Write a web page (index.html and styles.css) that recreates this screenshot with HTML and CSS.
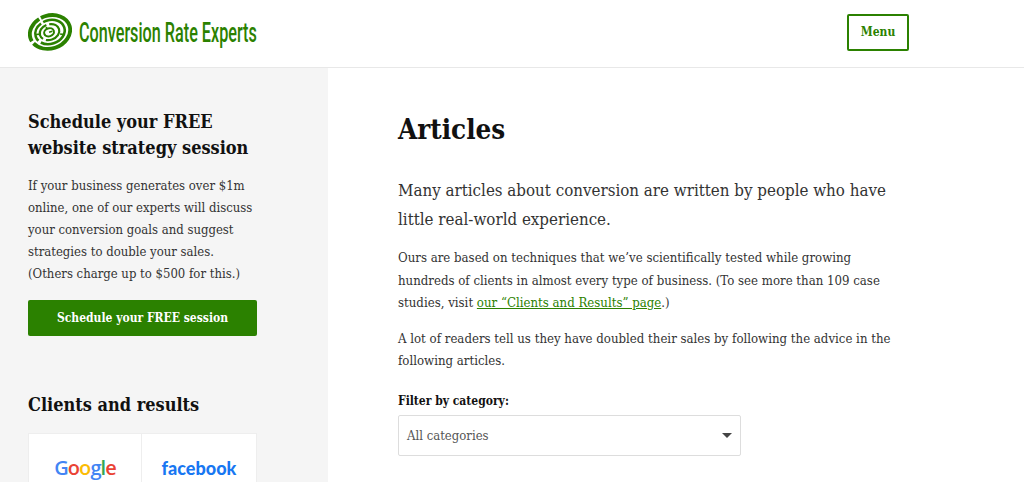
FILE: index.html
```html
<!DOCTYPE html>
<html lang="en">
<head>
<meta charset="utf-8">
<title>Articles</title>
<link rel="stylesheet" href="styles.css">
</head>
<body>
<header class="top">
  <a class="logo" href="#">
    <svg class="mark" viewBox="0 0 44 38" width="44" height="38" fill="none" stroke="#2b8100">
      <g transform="rotate(-18 22 19)">
        <ellipse cx="22" cy="19" rx="20.5" ry="16.5" stroke-width="3.8" stroke-dasharray="52 2.5 26 2 60 3"/>
        <ellipse cx="22" cy="19" rx="15" ry="11.8" stroke-width="2.6" stroke-dasharray="34 3 20 2.5 30"/>
        <ellipse cx="21.5" cy="19" rx="10" ry="7.8" stroke-width="2.2" stroke-dasharray="20 3 18 3"/>
        <ellipse cx="21" cy="19" rx="5" ry="4" stroke-width="2"/>
        <path d="M21 19h3.5M20 15v-2M31 24l4 2M8 17l4 1" stroke-width="1.6"/>
      </g>
    </svg>
    <span class="wordmark">Conversion Rate Experts</span>
  </a>
  <a class="menu" href="#">Menu</a>
</header>
<div class="page">
  <aside class="side">
    <h2 class="side-h">Schedule your FREE website strategy session</h2>
    <p class="side-p">If your business generates over $1m online, one of our experts will discuss your conversion goals and suggest strategies to double your sales. (Others charge up to $500 for this.)</p>
    <a class="cta" href="#">Schedule your FREE session</a>
    <h2 class="side-h clients-h">Clients and results</h2>
    <div class="clients">
      <div class="client client-first">
        <span class="google"><span class="b">G</span><span class="r">o</span><span class="y">o</span><span class="b">g</span><span class="g">l</span><span class="r">e</span></span>
      </div>
      <div class="client"><span class="facebook">facebook</span></div>
    </div>
  </aside>
  <main class="main">
    <h1 class="title">Articles</h1>
    <p class="lead">Many articles about conversion are written by people who have little real-world experience.</p>
    <p class="body">Ours are based on techniques that we’ve scientifically tested while growing hundreds of clients in almost every type of business. (To see more than 109 case studies, visit <a href="#">our “Clients and Results” page</a>.)</p>
    <p class="body">A lot of readers tell us they have doubled their sales by following the advice in the following articles.</p>
    <label class="filter-label">Filter by category:</label>
    <div class="select">All categories<span class="caret"></span></div>
  </main>
</div>
</body>
</html>
```
FILE: styles.css
```css
* { box-sizing: border-box; }
html, body { margin: 0; height: 482px; overflow: hidden; }
body { font-family: "DejaVu Serif Condensed", "DejaVu Serif", serif; color: #111; background: #fff; }
.top { height: 68px; border-bottom: 1px solid #e8e8e8; display: flex; align-items: center; padding: 0 115px 3px 28px; justify-content: space-between; }
.logo { display: flex; align-items: center; gap: 7px; text-decoration: none; width: 240px; flex: none; }
.mark { display: block; flex: none; }
.wordmark { font-family: "Roboto", sans-serif; font-weight: 500; font-size: 27px; color: #2b8100; white-space: nowrap; display: inline-block; transform: scaleX(.6); transform-origin: left center; padding-top: 2px; }
.menu { width: 62px; height: 37px; border: 2px solid #2b8100; border-radius: 2px; display: flex; align-items: center; justify-content: center; color: #2b8100; font-weight: 700; font-size: 12px; text-decoration: none; }
.page { display: flex; height: 414px; overflow: hidden; }
.side { width: 328px; background: #f5f5f5; padding: 41px 71px 0 28px; flex: none; }
.side-h { margin: 0; font-size: 18px; line-height: 26px; font-weight: 700; }
.side-p { margin: 14px 0 0; font-size: 13px; line-height: 22px; color: #333; }
.cta { display: flex; align-items: center; justify-content: center; height: 36px; margin-top: 15px; background: #2b8100; color: #fff; font-weight: 700; font-size: 12px; text-decoration: none; border-radius: 2px; }
.clients-h { margin-top: 56px; }
.clients { display: flex; margin-top: 15px; height: 70px; border: 1px solid #eee; background: #fff; }
.client { flex: 1; display: flex; justify-content: center; padding-top: 21px; }
.client-first { flex: none; width: 112px; }
.client + .client { border-left: 1px solid #eee; }
.google { font-family: "Open Sans", sans-serif; font-weight: 600; font-size: 20px; letter-spacing: -.9px; line-height: 26px; }
.b { color: #4285f4; } .r { color: #ea4335; } .y { color: #fbbc05; } .g { color: #34a853; }
.facebook { font-family: "Lato", sans-serif; font-weight: 900; font-size: 18px; color: #1877f2; line-height: 26px; }
.main { flex: 1; padding: 41px 130px 0 70px; }
.title { margin: 0; font-size: 27.5px; line-height: 40px; font-weight: 700; }
.lead { margin: 27px 0 0; font-size: 16.8px; line-height: 29px; color: #333; max-width: 500px; }
.body { margin: 13px 0 0; font-size: 13.1px; line-height: 22.5px; color: #333; max-width: 495px; }
.body a { color: #2b8100; }
.filter-label { display: block; margin-top: 17px; font-size: 12px; font-weight: 700; line-height: 22px; }
.select { position: relative; width: 343px; height: 41px; margin-top: 3px; border: 1px solid #ddd; border-radius: 2px; background: #fff; display: flex; align-items: center; padding-left: 8px; font-size: 13px; color: #555; }
.caret { position: absolute; right: 8px; top: 17px; border: 5px solid transparent; border-top-color: #444; border-bottom: 0; }
```
